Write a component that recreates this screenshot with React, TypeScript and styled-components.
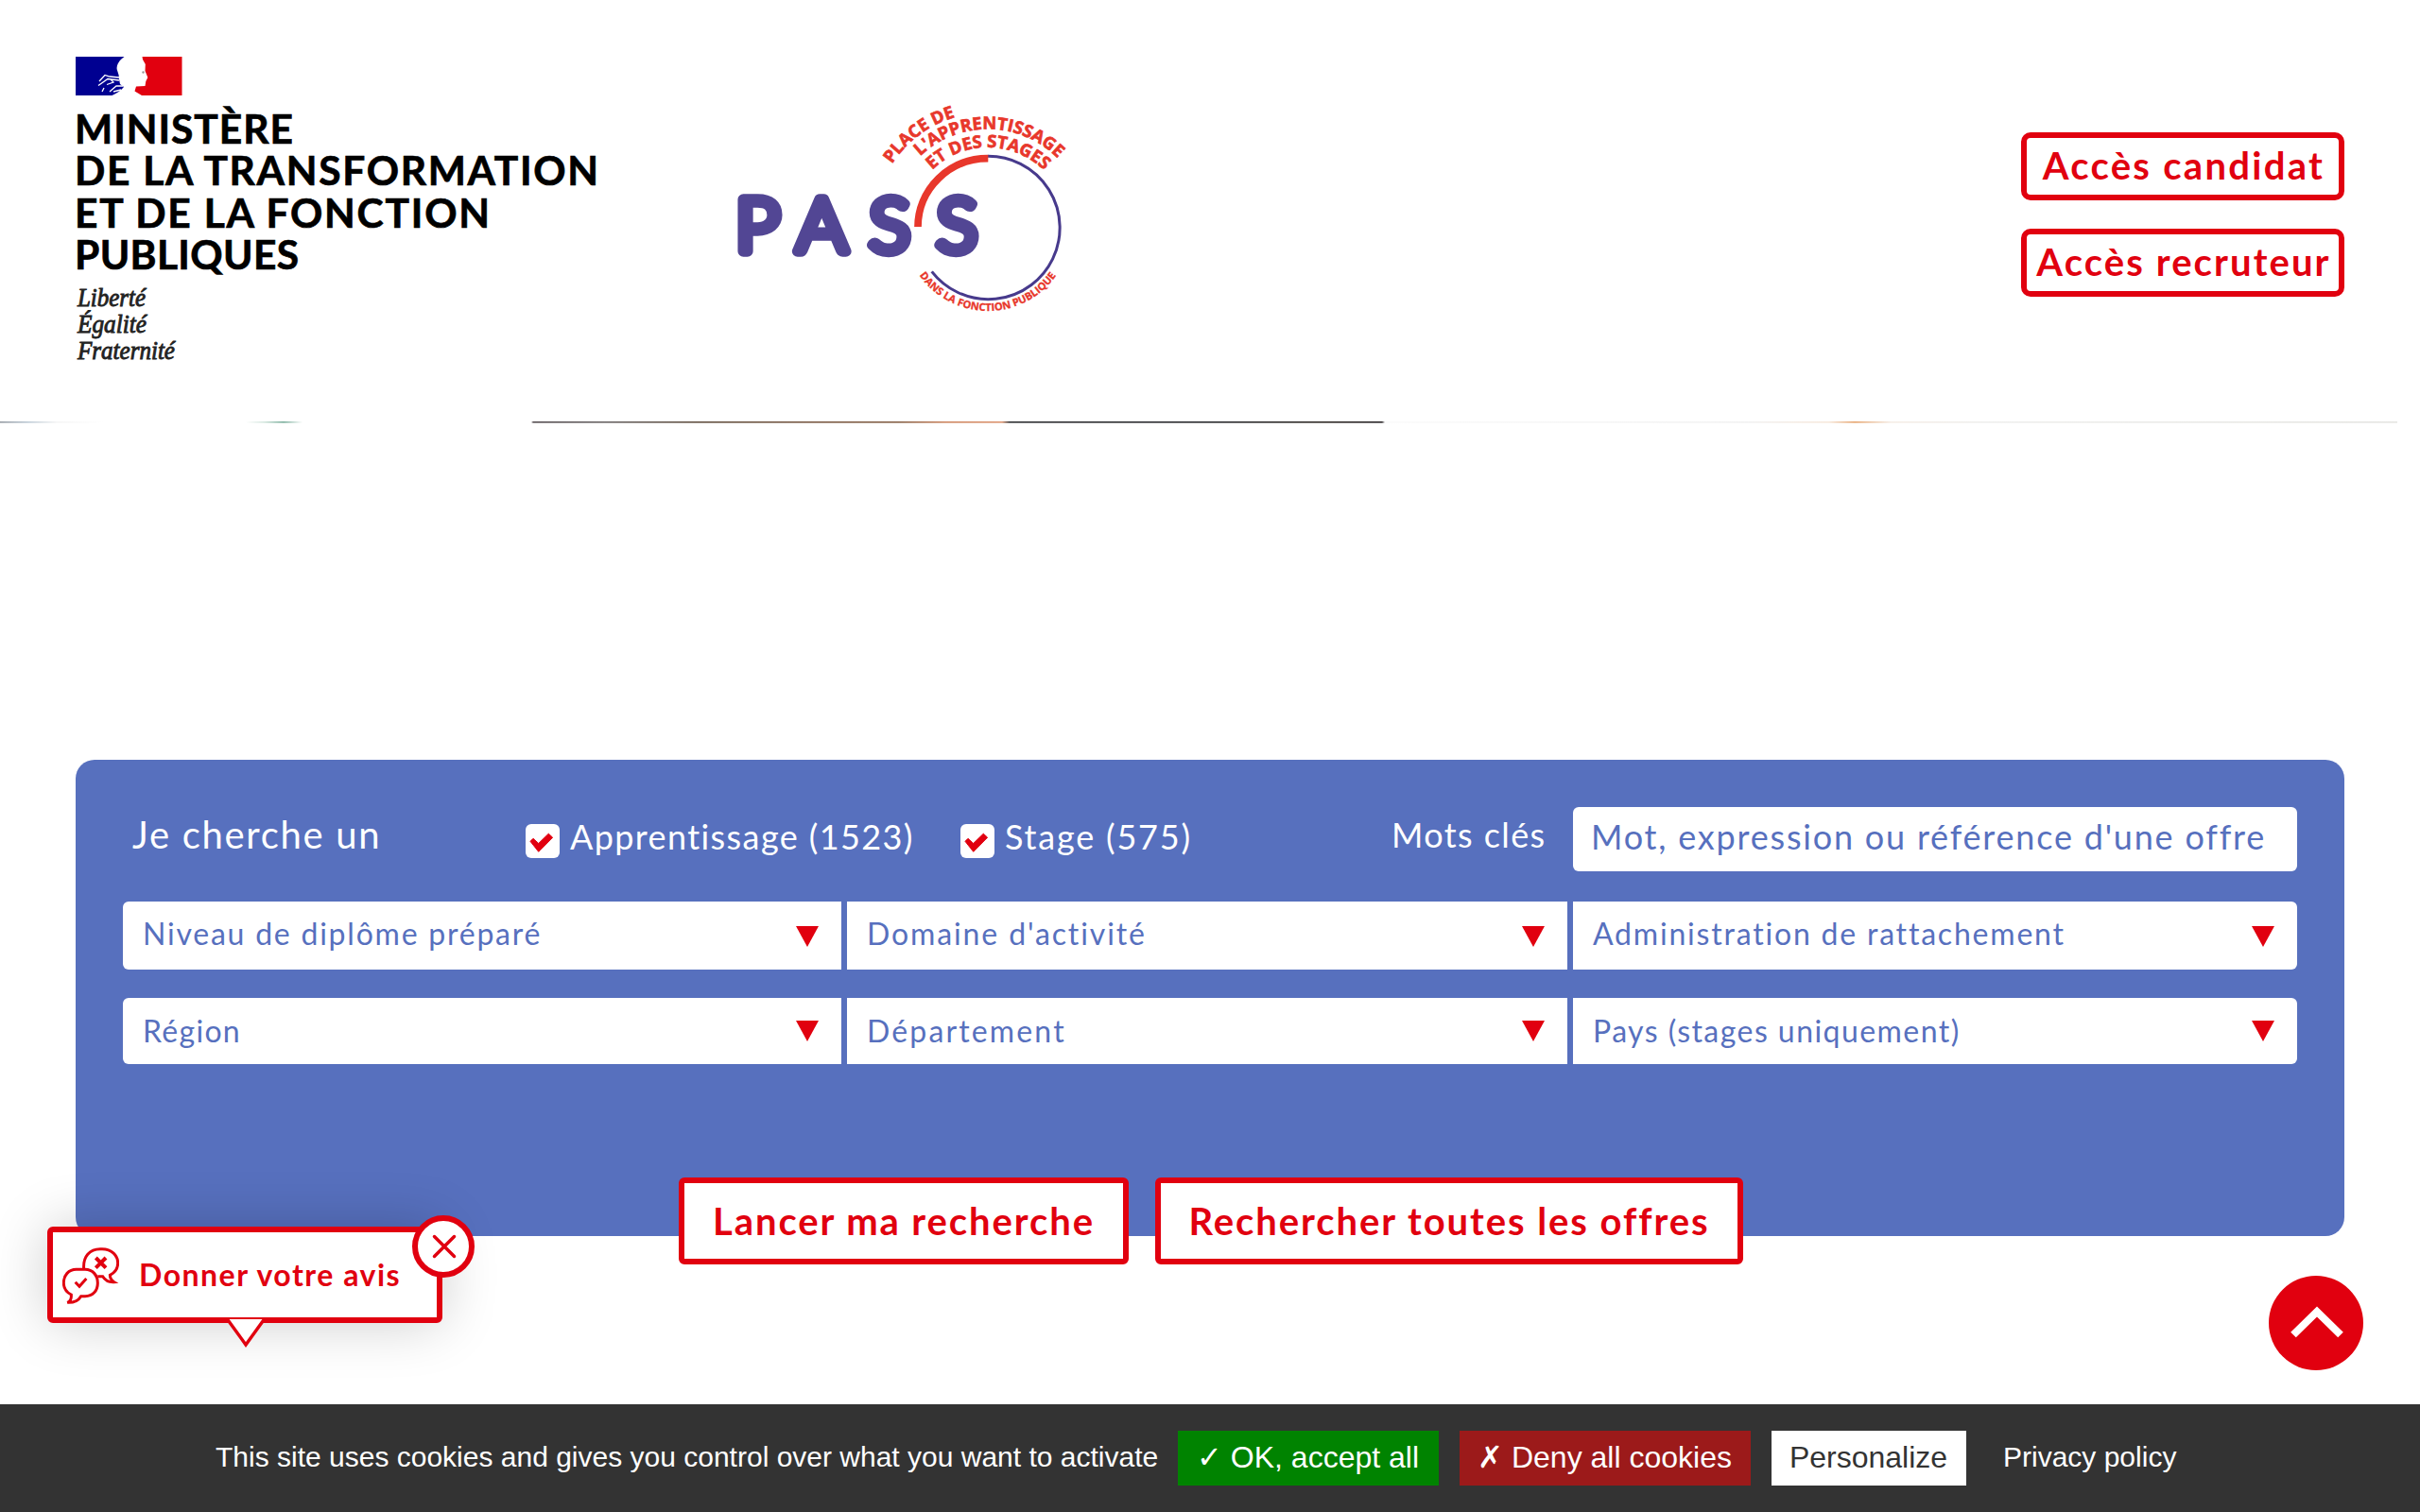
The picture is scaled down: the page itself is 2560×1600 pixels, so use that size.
import React from 'react';
import styled, { createGlobalStyle } from 'styled-components';

const RED = '#e1000f';
const BLUE = '#5770be';
const SANS = "Lato, 'Open Sans', 'Liberation Sans', sans-serif";

const GlobalStyle = createGlobalStyle`
  * { box-sizing: border-box; }
  body { margin: 0; background: #fff; font-family: ${SANS}; overflow: hidden; }
  button { font-family: inherit; cursor: pointer; }
`;

const Page = styled.div`
  position: relative;
  width: 100%;
  height: 1600px;
  overflow: hidden;
  display: flex;
  flex-direction: column;
`;

const Header = styled.header`
  height: 446px;
  flex: none;
  display: flex;
  align-items: flex-start;
  padding: 60px 80px 0;
`;

const LogoSvg = styled.svg`
  overflow: visible;
`;

const PassLogoWrap = styled.a`
  display: block;
  margin: 52px 0 0 140px;
  line-height: 0;
`;

const AccessList = styled.nav`
  margin: 80px 0 0 auto;
  display: flex;
  flex-direction: column;
  gap: 30px;
`;

const AccessButton = styled.button<{ $track: number }>`
  width: 342px;
  height: 72px;
  padding: 0 0 0 2px;
  border: 6px solid ${RED};
  border-radius: 10px;
  background: #fff;
  color: ${RED};
  font-size: 40px;
  font-weight: 700;
  line-height: 58px;
  letter-spacing: ${(p) => p.$track}px;
  white-space: nowrap;
  display: flex;
  justify-content: center;
`;

const HeroStrip = styled.div`
  height: 2px;
  width: 2536px;
  flex: none;
  mask-image: linear-gradient(180deg, #000 50%, rgba(0, 0, 0, 0.45) 50%);
  background: linear-gradient(
    90deg,
    #8a9199 0, #b8c6d2 30px, #f4f4f4 60px, #fff 110px, #fff 260px, #cfe3da 280px,
    #6aa48f 300px, #fff 320px, #fff 562px, #443c40 564px, #5b5656 640px, #53402f 740px,
    #6e4b33 860px, #7a5236 950px, #c97b52 1000px, #d98a62 1060px, #1b1c1f 1068px,
    #16171b 1280px, #1d1713 1400px, #141013 1462px, #fafafa 1465px, #f0f0f0 1850px,
    #f6e6d8 1935px, #e39a5e 1962px, #f4ebe3 2000px, #ededeb 2100px, #e2e2de 2536px
  );
`;

const SearchPanel = styled.form`
  margin: 356px 80px 0;
  height: 504px;
  flex: none;
  padding: 50px 50px 0;
  border-radius: 20px;
  background: ${BLUE};
  display: flex;
  flex-direction: column;
`;

const CriteriaRow = styled.div`
  height: 68px;
  flex: none;
  display: flex;
  color: #fff;
`;

const Lead = styled.span<{ $track: number }>`
  width: 426px;
  padding-left: 10px;
  font-size: 40px;
  line-height: 59px;
  letter-spacing: ${(p) => p.$track}px;
  white-space: nowrap;
`;

const CheckLabel = styled.label<{ $width: number; $track: number }>`
  width: ${(p) => p.$width}px;
  display: flex;
  gap: 11px;
  font-size: 36px;
  line-height: 62px;
  letter-spacing: ${(p) => p.$track}px;
  white-space: nowrap;
`;

const CheckBox = styled.span`
  width: 36px;
  height: 36px;
  flex: none;
  margin-top: 18px;
  border-radius: 6px;
  background: #fff;
  line-height: 0;
`;

const KeywordLabel = styled.label<{ $track: number }>`
  margin-left: auto;
  width: 192px;
  font-size: 36px;
  line-height: 58px;
  letter-spacing: ${(p) => p.$track}px;
  white-space: nowrap;
`;

const KeywordInput = styled.div<{ $track: number }>`
  width: 766px;
  height: 68px;
  border-radius: 6px;
  padding-left: 19px;
  background: #fff;
  color: ${BLUE};
  font-size: 36px;
  line-height: 62px;
  letter-spacing: ${(p) => p.$track}px;
  white-space: nowrap;
`;

const SelectGrid = styled.div<{ $height: number; $top: number }>`
  margin-top: ${(p) => p.$top}px;
  height: ${(p) => p.$height}px;
  flex: none;
  display: grid;
  grid-template-columns: 760px 762px 766px;
  gap: 6px;
  border-radius: 6px;
  overflow: hidden;
`;

const Select = styled.div<{ $track: number; $line: number }>`
  padding: 0 24px 0 21px;
  background: #fff;
  color: ${BLUE};
  font-size: 32px;
  line-height: ${(p) => p.$line}px;
  letter-spacing: ${(p) => p.$track}px;
  white-space: nowrap;
  display: flex;
  justify-content: space-between;
`;

const Caret = styled.span<{ $top: number }>`
  width: 0;
  height: 0;
  margin-top: ${(p) => p.$top}px;
  border-left: 12px solid transparent;
  border-right: 12px solid transparent;
  border-top: 22px solid ${RED};
`;

const Actions = styled.div`
  margin: 120px 0 0 588px;
  flex: none;
  display: flex;
  gap: 28px;
`;

const ActionButton = styled.button<{ $width: number; $track: number }>`
  width: ${(p) => p.$width}px;
  height: 92px;
  flex: none;
  padding: 1px 0 0;
  border: 6px solid ${RED};
  border-radius: 6px;
  background: #fff;
  color: ${RED};
  font-size: 40px;
  font-weight: 700;
  line-height: 78px;
  letter-spacing: ${(p) => p.$track}px;
  white-space: nowrap;
  display: flex;
  justify-content: center;
`;

const Feedback = styled.aside`
  position: absolute;
  left: 50px;
  top: 1298px;
  width: 418px;
  height: 102px;
  display: flex;
  align-items: flex-start;
  padding: 16px 10px 0;
  border: 6px solid ${RED};
  border-radius: 6px;
  background: #fff;
  color: ${RED};
  box-shadow: 0 0 60px rgba(0, 0, 0, 0.2);
`;

const FeedbackText = styled.span<{ $track: number }>`
  margin-left: 21px;
  font-size: 32px;
  font-weight: 700;
  line-height: 57px;
  letter-spacing: ${(p) => p.$track}px;
  white-space: nowrap;
`;

const CloseBadge = styled.button`
  position: absolute;
  right: -40px;
  top: -18px;
  width: 66px;
  height: 66px;
  padding: 0 0 0 2px;
  border: 6px solid ${RED};
  border-radius: 50%;
  background: #fff;
  display: flex;
  align-items: center;
  justify-content: center;
`;

const Pointer = styled.svg`
  position: absolute;
  left: 184px;
  top: 91px;
`;

const ScrollTop = styled.button`
  position: absolute;
  left: 2400px;
  top: 1350px;
  width: 100px;
  height: 100px;
  padding: 0;
  border: 0;
  border-radius: 50%;
  background: ${RED};
  line-height: 0;
`;

const CookieBar = styled.footer`
  position: absolute;
  left: 0;
  right: 0;
  bottom: 0;
  height: 114px;
  padding: 28px 0 0 228px;
  display: flex;
  align-items: flex-start;
  background: #333;
  color: #fff;
  font-family: 'Liberation Sans', Arial, sans-serif;
  font-size: 30px;
  line-height: 56px;
  white-space: nowrap;
`;

const CookieText = styled.span`
  width: 1018px;
`;

const CookieButton = styled.button<{ $bg: string; $fg: string; $width: number }>`
  width: ${(p) => p.$width}px;
  height: 58px;
  margin-right: 22px;
  padding: 0 1px 3px 0;
  border: 0;
  background: ${(p) => p.$bg};
  color: ${(p) => p.$fg};
  font-family: inherit;
  font-size: 32px;
  line-height: 54px;
  white-space: pre;
`;

const PrivacyLink = styled.a`
  margin-left: 17px;
  color: #fff;
`;

const ministryLines = [
  { text: 'MINISTÈRE', y: 92.3, w: 228 },
  { text: 'DE LA TRANSFORMATION', y: 136.3, w: 551 },
  { text: 'ET DE LA FONCTION', y: 181, w: 436 },
  { text: 'PUBLIQUES', y: 225.2, w: 234 },
];

const mottoLines = [
  { text: 'Liberté', y: 264, w: 72 },
  { text: 'Égalité', y: 292, w: 73 },
  { text: 'Fraternité', y: 320, w: 103 },
];

function MinistryLogo() {
  return (
    <LogoSvg width="560" height="340" viewBox="0 0 560 340">
      <path
        d="M0 0H51.500C46 4 43.500 8 43.600 13L45.600 19.500L46 24L47 29L51 32C48 36 43 39 38.500 41H0Z"
        fill="#000091"
      />
      <path
        d="M46 22L36 21L31 19.500L25 26M46 25L34 23.500L24 30.500M37 24L40 27L33 29.500M50 31L43 31L36 37M48 35L40 37M28 37L30 33"
        fill="none"
        stroke="#fff"
        strokeWidth="1.300"
      />
      <path d="M70.500 0H112.500V41H70L62.500 36.500L64 31.500L73.500 31L74.300 26L76.300 22L73.500 15L73.800 8L71 3Z" fill={RED} />
      <circle cx="71.500" cy="16.500" r="1.200" fill="#999" />
      <g fontFamily="Lato, sans-serif" fontWeight="700" fontSize="42.500" fill="#000" stroke="#000" strokeWidth="0.700">
        {ministryLines.map((l) => (
          <text key={l.text} x="-1" y={l.y} textLength={l.w + 3} lengthAdjust="spacing">
            {l.text}
          </text>
        ))}
      </g>
      <g
        fontFamily="'Liberation Serif', serif"
        fontStyle="italic"
        fontSize="27"
        fill="#222"
        stroke="#222"
        strokeWidth="0.900"
      >
        {mottoLines.map((l) => (
          <text key={l.text} x="2" y={l.y} textLength={l.w} lengthAdjust="spacingAndGlyphs">
            {l.text}
          </text>
        ))}
      </g>
    </LogoSvg>
  );
}

// Point on a circle around the ring's centre, angle in degrees clockwise from the top.
const at = (r: number, deg: number) => {
  const a = (deg * Math.PI) / 180;
  return `${(855 + r * Math.sin(a)).toFixed(1)} ${(452 - r * Math.cos(a)).toFixed(1)}`;
};

const ringTexts = [
  { id: 'ring-place', text: 'PLACE DE', r: 365, from: -56.5, to: -16.5, size: 55 },
  { id: 'ring-app', text: "L'APPRENTISSAGE", r: 312, from: -43.5, to: 45.3, size: 55 },
  { id: 'ring-stages', text: 'ET DES STAGES', r: 254, from: -44, to: 44.5, size: 55 },
];

function PassLogo() {
  return (
    <LogoSvg width="346" height="218" viewBox="60 66 1038 654">
      <defs>
        {ringTexts.map((t) => (
          <path key={t.id} id={t.id} d={`M${at(t.r, t.from)}A${t.r} ${t.r} 0 0 1 ${at(t.r, t.to + 12)}`} />
        ))}
        <path id="ring-bottom" d={`M${at(265, 235)}A265 265 0 0 0 ${at(265, 115)}`} />
      </defs>
      <path d="M855 226A227 227 0 1 1 677 592" fill="none" stroke="#473a8c" strokeWidth="9" />
      <path d="M633 450A222 218 0 0 1 856 233" fill="none" stroke="#e8372b" strokeWidth="23" />
      <text
        transform="scale(1.06 1)"
        y="529"
        textAnchor="middle"
        fontFamily="Lato, sans-serif"
        fontWeight="300"
        fontSize="229"
        fill="#524694"
        stroke="#524694"
        strokeWidth="34"
        strokeLinejoin="round"
      >
        <tspan x="117.500">P</tspan>
        <tspan x="309.500">A</tspan>
        <tspan x="512.500">S</tspan>
        <tspan x="714">S</tspan>
      </text>
      <g fontFamily="'Open Sans', sans-serif" fontWeight="700" fill="#e8372b" stroke="#e8372b" strokeWidth="2">
        {ringTexts.map((t) => (
          <text key={t.id} fontSize={t.size} textLength={((t.to - t.from) * Math.PI * t.r) / 180} lengthAdjust="spacing">
            <textPath href={`#${t.id}`}>{t.text}</textPath>
          </text>
        ))}
        <text fontSize="33" textLength="508" lengthAdjust="spacing" strokeWidth="1">
          <textPath href="#ring-bottom">DANS LA FONCTION PUBLIQUE</textPath>
        </text>
      </g>
    </LogoSvg>
  );
}

function ChatIcon() {
  return (
    <svg width="60" height="60" viewBox="108 300 180 180" fill="none" stroke={RED} strokeWidth="9">
      <path d="M176 368C173 328 195 305 228 305H234C264 305 284 325 284 350C284 368 275 380 259 388C259 398 264 405 272 410C256 411 244 405 236 392H220" />
      <path d="M152 370H180C204 370 220 388 220 413C220 438 204 455 180 455H167C160 467 148 476 124 475C135 470 137 460 136 450C120 442 112 430 112 413C112 388 128 370 152 370Z" />
      <path d="M149 410L162 424L184 399" />
      <path d="M214 333L246 365M246 333L214 365" strokeWidth="12" />
    </svg>
  );
}

function Tick() {
  return (
    <CheckBox>
      <svg width="36" height="36" viewBox="0 0 36 36">
        <path
          d="M5 18.300L8 15.300L13.700 20.500L24.300 10.200L28.600 14.200L13.700 29.300Z"
          fill={RED}
          stroke={RED}
          strokeWidth="1"
          strokeLinejoin="round"
        />
      </svg>
    </CheckBox>
  );
}

const firstRow = [
  { label: 'Niveau de diplôme préparé', track: 1.77 },
  { label: "Domaine d'activité", track: 1.88 },
  { label: 'Administration de rattachement', track: 1.8 },
];

const secondRow = [
  { label: 'Région', track: 1.3 },
  { label: 'Département', track: 2.15 },
  { label: 'Pays (stages uniquement)', track: 1.45 },
];

export default function App() {
  return (
    <>
      <GlobalStyle />
      <Page>
        <Header>
          <MinistryLogo />
          <PassLogoWrap>
            <PassLogo />
          </PassLogoWrap>
          <AccessList>
            <AccessButton $track={2.3}>Accès candidat</AccessButton>
            <AccessButton $track={2.1}>Accès recruteur</AccessButton>
          </AccessList>
        </Header>
        <HeroStrip />
        <SearchPanel>
          <CriteriaRow>
            <Lead $track={1.7}>Je cherche un</Lead>
            <CheckLabel $width={460} $track={1.4}>
              <Tick />
              Apprentissage (1523)
            </CheckLabel>
            <CheckLabel $width={250} $track={1.8}>
              <Tick />
              Stage (575)
            </CheckLabel>
            <KeywordLabel $track={1.4}>Mots clés</KeywordLabel>
            <KeywordInput $track={1.8}>Mot, expression ou référence d'une offre</KeywordInput>
          </CriteriaRow>
          <SelectGrid $height={72} $top={32}>
            {firstRow.map((s) => (
              <Select key={s.label} $track={s.track} $line={68}>
                {s.label}
                <Caret $top={26} />
              </Select>
            ))}
          </SelectGrid>
          <SelectGrid $height={70} $top={30}>
            {secondRow.map((s) => (
              <Select key={s.label} $track={s.track} $line={69}>
                {s.label}
                <Caret $top={24} />
              </Select>
            ))}
          </SelectGrid>
          <Actions>
            <ActionButton type="button" $width={476} $track={1.9}>Lancer ma recherche</ActionButton>
            <ActionButton type="button" $width={622} $track={1.93}>Rechercher toutes les offres</ActionButton>
          </Actions>
        </SearchPanel>

        <Feedback>
          <ChatIcon />
          <FeedbackText $track={1.5}>Donner votre avis</FeedbackText>
          <CloseBadge aria-label="Fermer">
            <svg width="26" height="26" viewBox="0 0 26 26" stroke={RED} strokeWidth="3.500" strokeLinecap="round">
              <path d="M2.500 2.500L23.500 23.500M23.500 2.500L2.500 23.500" />
            </svg>
          </CloseBadge>
          <Pointer width="40" height="34" viewBox="0 0 40 34">
            <path d="M1 1L20 27L39 1Z" fill="#fff" />
            <path d="M0.500 1L20 28L39.500 1" fill="none" stroke={RED} strokeWidth="3.400" />
          </Pointer>
        </Feedback>

        <ScrollTop aria-label="Haut de page">
          <svg width="100" height="100" viewBox="0 0 100 100">
            <path d="M26 62.500L51 38L76 62.500" fill="none" stroke="#fff" strokeWidth="8" />
          </svg>
        </ScrollTop>

        <CookieBar>
          <CookieText>This site uses cookies and gives you control over what you want to activate</CookieText>
          <CookieButton $bg="#008300" $fg="#fff" $width={276}>✓ OK, accept all</CookieButton>
          <CookieButton $bg="#9c1a1a" $fg="#fff" $width={308}>✗ Deny all cookies</CookieButton>
          <CookieButton $bg="#fff" $fg="#333" $width={206}>Personalize</CookieButton>
          <PrivacyLink>Privacy policy</PrivacyLink>
        </CookieBar>
      </Page>
    </>
  );
}
